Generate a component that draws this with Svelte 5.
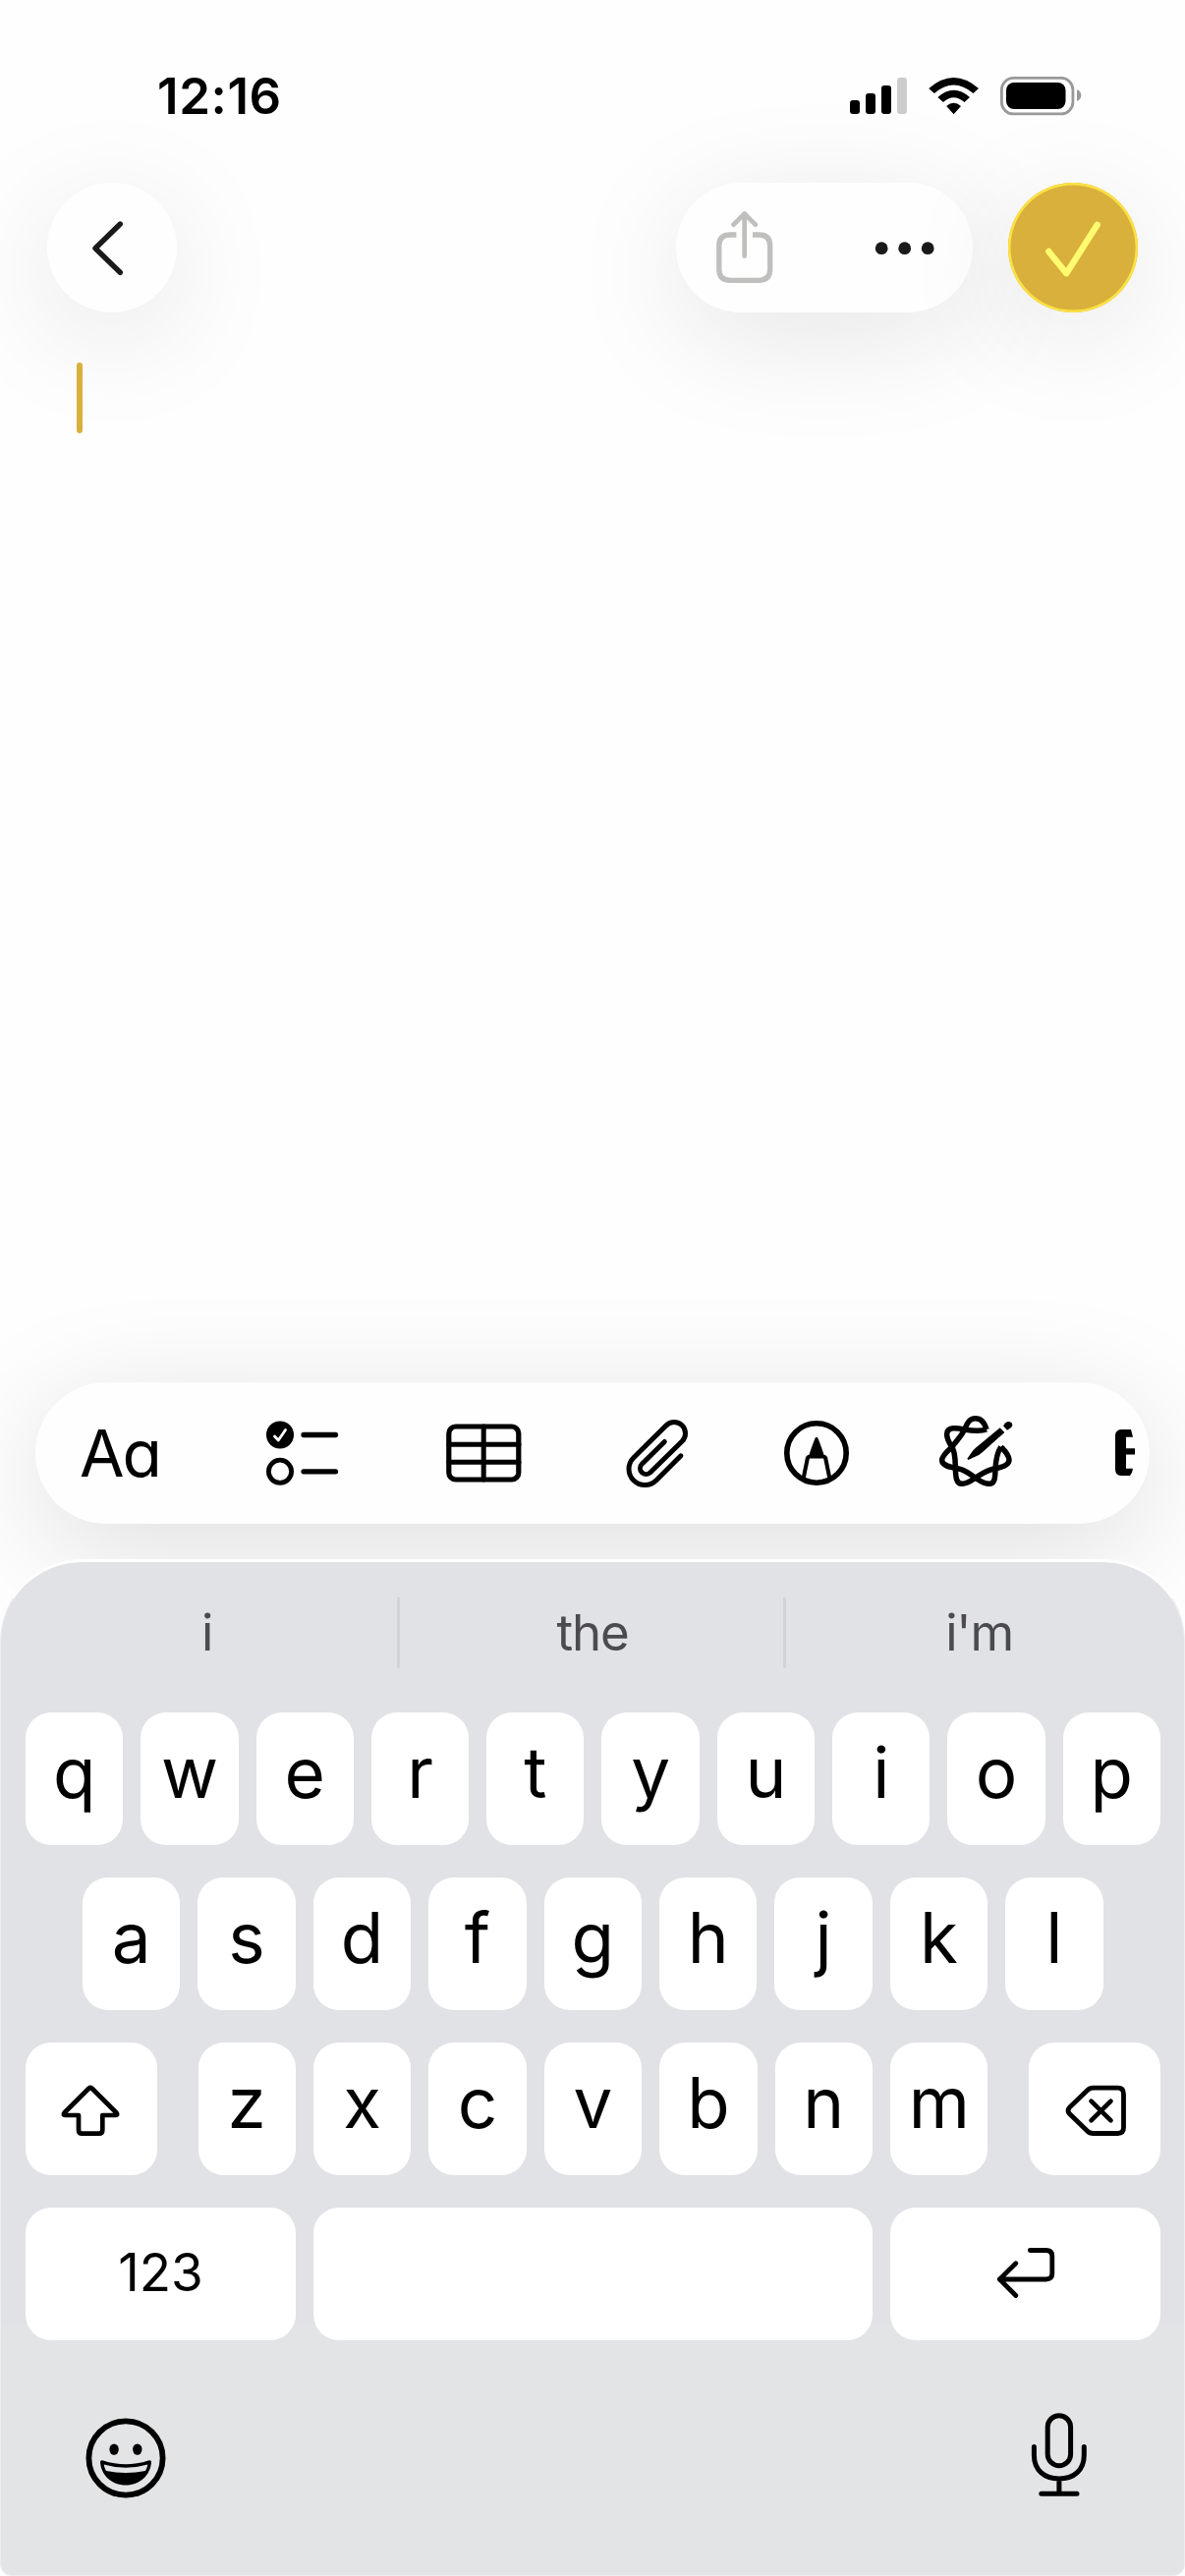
<script>
  const suggestions = ['i', 'the', "i'm"];
  const topRow = [...'qwertyuiop'];
  const homeRow = [...'asdfghjkl'];
  const bottomRow = [...'zxcvbnm'];
</script>

<div class="screen">
  <header class="status">
    <span class="time">12:16</span>
    <svg class="indicators" width="236" height="40" viewBox="865 78 236 40">
      <rect x="865" y="102" width="10" height="14" rx="3" />
      <rect x="881" y="95" width="10" height="21" rx="3" />
      <rect x="897" y="87" width="10" height="29" rx="3" />
      <rect x="913" y="79" width="10" height="37" rx="3" fill="#ccc" />
      <path d="M945.3 90 Q970.5 68 996 90 L990.5 95 Q970.5 78 950.8 95Z" />
      <path d="M954.4 99 Q970.5 84.500 987 99 L981.500 104 Q970.500 94.500 959.900 104Z" />
      <path d="M963.200 108 Q970.500 101.500 978 108 L970.600 116.300Z" />
      <rect x="1019.400" y="79.400" width="72.500" height="36.500" rx="12" fill="none" stroke="#999" stroke-width="2.800" />
      <rect x="1024" y="84" width="60.500" height="27" rx="8" />
      <path d="M1096 91 Q1100.300 93 1100.300 97 T1096 103Z" fill="#999" />
    </svg>
  </header>

  <nav class="nav">
    <button class="glass round" aria-label="Back">
      <svg width="132" height="132" viewBox="48 186 132 132">
        <path class="line dark" d="M122.300 228 L97 252.700 L122.300 277.300" stroke-width="5.400" />
      </svg>
    </button>
    <div class="glass pill">
      <svg width="302" height="132" viewBox="688 186 302 132">
        <g class="line" stroke="#bfbfbd" stroke-width="5.300">
          <path stroke-linecap="butt" d="M749.400 239 H743 Q731.800 239 731.800 250 V274 Q731.800 285.300 743 285.300 H772.500 Q783.700 285.300 783.700 274 V250 Q783.700 239 772.500 239 H766" />
          <path d="M757.700 218.500 V260.500 M746.600 228.600 L757.700 217.500 L768.800 228.600" stroke-width="4.800" />
        </g>
        <g fill="#1a1a1a">
          <circle cx="897.200" cy="252.700" r="6.400" />
          <circle cx="920.700" cy="252.700" r="6.400" />
          <circle cx="944.200" cy="252.700" r="6.400" />
        </g>
      </svg>
    </div>
    <button class="glass round done" aria-label="Done">
      <svg width="132" height="132" viewBox="1026 186 132 132">
        <path class="line" d="M1067.300 256 L1085.300 278.200 L1116.700 228.800" stroke="#fffb70" stroke-width="6.400" />
      </svg>
    </button>
  </nav>

  <main class="editor"><span class="caret"></span></main>

  <div class="toolbar">
    <span class="format">Aa</span>
    <svg class="tools" width="1080" height="144" viewBox="90 1407 1080 144">
      <circle cx="285" cy="1460.500" r="14" />
      <path class="line" d="M279.500 1462 L283.300 1466 L290.500 1455.500" stroke="#fff" stroke-width="2.800" />
      <circle cx="285" cy="1497.800" r="11.600" fill="none" stroke="#000" stroke-width="4.800" />
      <path class="line black" d="M309 1460.500 H341.500 M309 1497.800 H341.500" stroke-width="5.300" />

      <g class="line black" stroke-width="5.200">
        <rect x="456.800" y="1452" width="71" height="54" rx="7" />
        <path d="M492.200 1452 V1506 M457 1470.300 H528 M457 1488.300 H528" stroke-width="5" />
      </g>

      <path class="line black" stroke-width="5" d="M692.900 1481.800 L667.900 1506.800 A16.300 16.300 0 0 1 644.800 1483.700 L678 1450.900 A11.400 11.400 0 0 1 694.200 1467 L661.800 1498.700 A6 6 0 0 1 653.200 1490.200 L676.300 1467.500" />

      <circle cx="831" cy="1479" r="30.200" fill="none" stroke="#000" stroke-width="5.600" />
      <path d="M829.500 1464 Q831 1461.500 832.500 1464 Q836.500 1474 838.500 1480.800 Q841.500 1481 841.700 1484.500 H820.300 Q820.500 1481 823.500 1480.800 Q825.500 1474 829.500 1464Z" />
      <path d="M822.100 1483 L817.600 1505 M839.900 1483 L844.400 1505" fill="none" stroke="#000" stroke-width="4" />

      <svg x="940" y="1425" width="110" height="110" viewBox="0 0 330 330">
        <g fill="none" stroke="#000" stroke-width="16.500" stroke-linejoin="miter">
          <path d="M192 90 C186 69 174 56 158 56 C136 56 131 78 124 92 C113 113 100 124 88 142 C78 153 56 168 56 184 C56 201 80 205 104 209 C128 213 142 226 158 238 C172 247 184 256 200 256 C219 256 218 232 219 212 C220 187 222 164 236 143" />
          <path d="M192 90 C172 97 148 94 124 90 C104 86 72 80 71 104 C70 120 80 133 88 146 C98 166 96 190 97 209 C98 232 98 256 118 256 C133 256 145 247 158 238 C176 226 192 213 219 209 C242 205 262 198 261 182 C260 166 248 156 236 143" />
        </g>
        <path d="M133 179 L151 154 Q158 146 166 140 L233 85 L247 99 L181 158 Q169 169 157 173 L136 183Z" />
        <path d="M243 79 L250 70 Q260 62 268 70 Q275 78 266 85 L255 92Z" />
      </svg>

      <path d="M1141 1455 H1151 L1153 1462.700 H1146 V1474.300 H1155 V1480.500 H1146 V1494.700 H1153 Q1152.500 1499 1150 1502 H1141 Q1135 1501.500 1135 1495.500 V1461.500 Q1135 1455.500 1141 1455Z" />
    </svg>
  </div>

  <section class="keyboard">
    <div class="suggestions">
      {#each suggestions as word}
        <span>{word}</span>
      {/each}
    </div>
    <div class="keys">
      <div class="row">
        {#each topRow as k}<button class="key">{k}</button>{/each}
      </div>
      <div class="row home">
        {#each homeRow as k}<button class="key">{k}</button>{/each}
      </div>
      <div class="row shifted">
        <button class="key wide" aria-label="Shift">
          <svg width="134" height="135" viewBox="26 2079 134 135">
            <path class="line black" stroke-width="4.700" d="M90.600 2125.500 Q92 2124 93.400 2125.500 L118.500 2150.500 Q120.500 2153 117.500 2153 H104.300 V2168 Q104.300 2171.700 100.800 2171.700 H83.500 Q80 2171.700 80 2168 V2153 H66.500 Q63.500 2153 65.500 2150.500 Z" />
          </svg>
        </button>
        <div class="group">
          {#each bottomRow as k}<button class="key">{k}</button>{/each}
        </div>
        <button class="key wide" aria-label="Delete">
          <svg width="134" height="135" viewBox="1046.500 2079 134 135">
            <g class="line black" stroke-width="4.800">
              <path d="M1112 2125.200 H1137 Q1143 2125.200 1143 2131.200 V2165.500 Q1143 2171.500 1137 2171.500 H1112 Q1108.500 2171.500 1106 2169 L1088 2151.500 Q1085 2148.300 1088 2145 L1106 2127.700 Q1108.500 2125.200 1112 2125.200Z" />
              <path d="M1110 2138.700 L1130 2158.300 M1130 2138.700 L1110 2158.300" stroke-width="4.600" />
            </g>
          </svg>
        </button>
      </div>
      <div class="row">
        <button class="key mode">123</button>
        <button class="key space" aria-label="Space"></button>
        <button class="key mode" aria-label="Return">
          <svg width="275" height="135" viewBox="905.500 2247 275 135">
            <path class="line black" stroke-width="4.800" d="M1047.800 2290.500 H1064 Q1070.300 2290.500 1070.300 2296.500 V2314 Q1070.300 2320 1064 2320 H1017 M1033.300 2303.700 L1016.800 2320 L1033.300 2336.500" />
          </svg>
        </button>
      </div>
    </div>
    <div class="dock">
      <svg width="82" height="82" viewBox="86.500 2460.500 82 82">
        <circle cx="127.500" cy="2501.500" r="37.600" fill="none" stroke="#000" stroke-width="5.800" />
        <ellipse cx="115.600" cy="2492.600" rx="4.700" ry="5.700" />
        <ellipse cx="139.300" cy="2492.600" rx="4.700" ry="5.700" />
        <path d="M101.500 2505.500 Q101.500 2503 104.500 2504 Q127.500 2511.500 150.500 2504 Q153.500 2503 153.500 2505.500 C152.500 2519 142 2529 127.500 2529 C113 2529 102.500 2519 101.500 2505.500Z" />
        <path d="M105.200 2508 Q127.500 2514.500 149.800 2508 Q149.300 2511.500 147.500 2514.500 Q127.500 2518.500 107.500 2514.500 Q105.700 2511.500 105.200 2508Z" fill="#e3e4e6" />
      </svg>
      <svg width="58" height="88" viewBox="1049.400 2455 58 88">
        <g class="line black" stroke-width="5">
          <rect x="1066.600" y="2458.700" width="23.400" height="51" rx="11.700" />
          <path d="M1052.800 2490.500 V2499 C1052.800 2514 1063 2523 1078.300 2523 C1093.600 2523 1103.700 2514 1103.700 2499 V2490.500 M1078.300 2523 V2538 M1060.200 2538.300 H1096.400" />
        </g>
      </svg>
    </div>
  </section>
</div>

<style>
  :global(body) {
    margin: 0;
    background: #fff;
  }
  .screen {
    width: 1206px;
    height: 2622px;
    display: flex;
    flex-direction: column;
    overflow: hidden;
    background: #fefefe;
    color: #000;
    font-family: Inter, 'Liberation Sans', sans-serif;
  }
  button {
    border: 0;
    padding: 0;
    margin: 0;
    background: none;
    font: inherit;
    color: inherit;
  }
  svg {
    display: block;
    flex: none;
  }
  .line {
    fill: none;
    stroke-linecap: round;
    stroke-linejoin: round;
  }
  .black {
    stroke: #000;
  }
  .dark {
    stroke: #1a1a1a;
  }
  .status {
    height: 186px;
    box-sizing: border-box;
    padding: 78px 105px 0 160px;
    display: flex;
    justify-content: space-between;
    align-items: flex-start;
  }
  .time {
    font-size: 51px;
    line-height: 40px;
    font-weight: 600;
    letter-spacing: 0.6px;
  }
  .nav {
    display: flex;
    height: 132px;
    padding: 0 48px;
  }
  .glass {
    height: 132px;
    border-radius: 66px;
    background: #fefefe;
    box-shadow: 0 24px 120px rgba(0, 0, 0, 0.1);
  }
  .round {
    width: 132px;
  }
  .pill {
    width: 302px;
    margin: 0 36px 0 auto;
  }
  .done {
    background: #d9b03c;
    box-shadow:
      inset 0 0 0 2.500px #fbe243,
      0 24px 120px rgba(0, 0, 0, 0.1);
  }
  .editor {
    flex: 1;
    padding: 51px 78px 0;
  }
  .caret {
    display: block;
    width: 6px;
    height: 72px;
    border-radius: 3px;
    background: #d9b03b;
  }
  .toolbar {
    height: 144px;
    margin: 0 36px 36px;
    border-radius: 72px;
    background: #fefefe;
    box-shadow: 0 24px 120px rgba(0, 0, 0, 0.13);
    display: grid;
    align-items: center;
  }
  .toolbar > * {
    grid-area: 1 / 1;
  }
  .format {
    padding-left: 45px;
    font-size: 66px;
    line-height: 143px;
    letter-spacing: -2px;
    font-feature-settings: 'cv11';
  }
  .tools {
    justify-self: end;
  }
  .keyboard {
    height: 1035px;
    box-sizing: border-box;
    padding-top: 36px;
    border: 1px solid #eeeef1;
    border-top: 3px solid #fff;
    border-radius: 84px 84px 12px 12px;
    background: linear-gradient(#e1e2e6 0 776px, #e3e4e6 776px);
  }
  .suggestions {
    height: 72px;
    display: grid;
    grid-template-columns: 403px 393px 1fr;
  }
  .suggestions span {
    display: flex;
    justify-content: center;
    font-size: 51px;
    line-height: 72px;
    letter-spacing: -1.2px;
    color: #4b4b4d;
    padding-left: 16px;
  }
  .suggestions span + span {
    border-left: 3px solid #d2d3d6;
    padding: 0 0 0 2px;
  }
  .suggestions span:last-child {
    padding: 0 12px 0 0;
  }
  .keys {
    display: flex;
    flex-direction: column;
    gap: 33px;
    padding: 45px 24px 0 25px;
  }
  .row,
  .group {
    display: flex;
    gap: 18px;
  }
  .home {
    padding: 0 58.500px 0 58px;
  }
  .shifted {
    gap: 0;
    justify-content: space-between;
  }
  .group {
    width: 804px;
  }
  .key {
    flex: 1;
    min-width: 0;
    height: 135px;
    box-sizing: border-box;
    border-radius: 26px;
    background: #fff;
    font-size: 71px;
    line-height: 122px;
    padding-bottom: 13px;
    text-align: center;
  }
  .key svg {
    margin-bottom: -13px;
  }
  .wide {
    flex: 0 0 134px;
  }
  .mode {
    flex: 0 0 275px;
    font-size: 53px;
    line-height: 132px;
    padding-bottom: 3px;
  }
  .mode svg {
    margin-bottom: -3px;
  }
  .dock {
    display: flex;
    justify-content: space-between;
    align-items: flex-start;
    padding: 73px 98px 0 85.500px;
  }
  .dock svg:first-child {
    margin-top: 5.500px;
  }
</style>
